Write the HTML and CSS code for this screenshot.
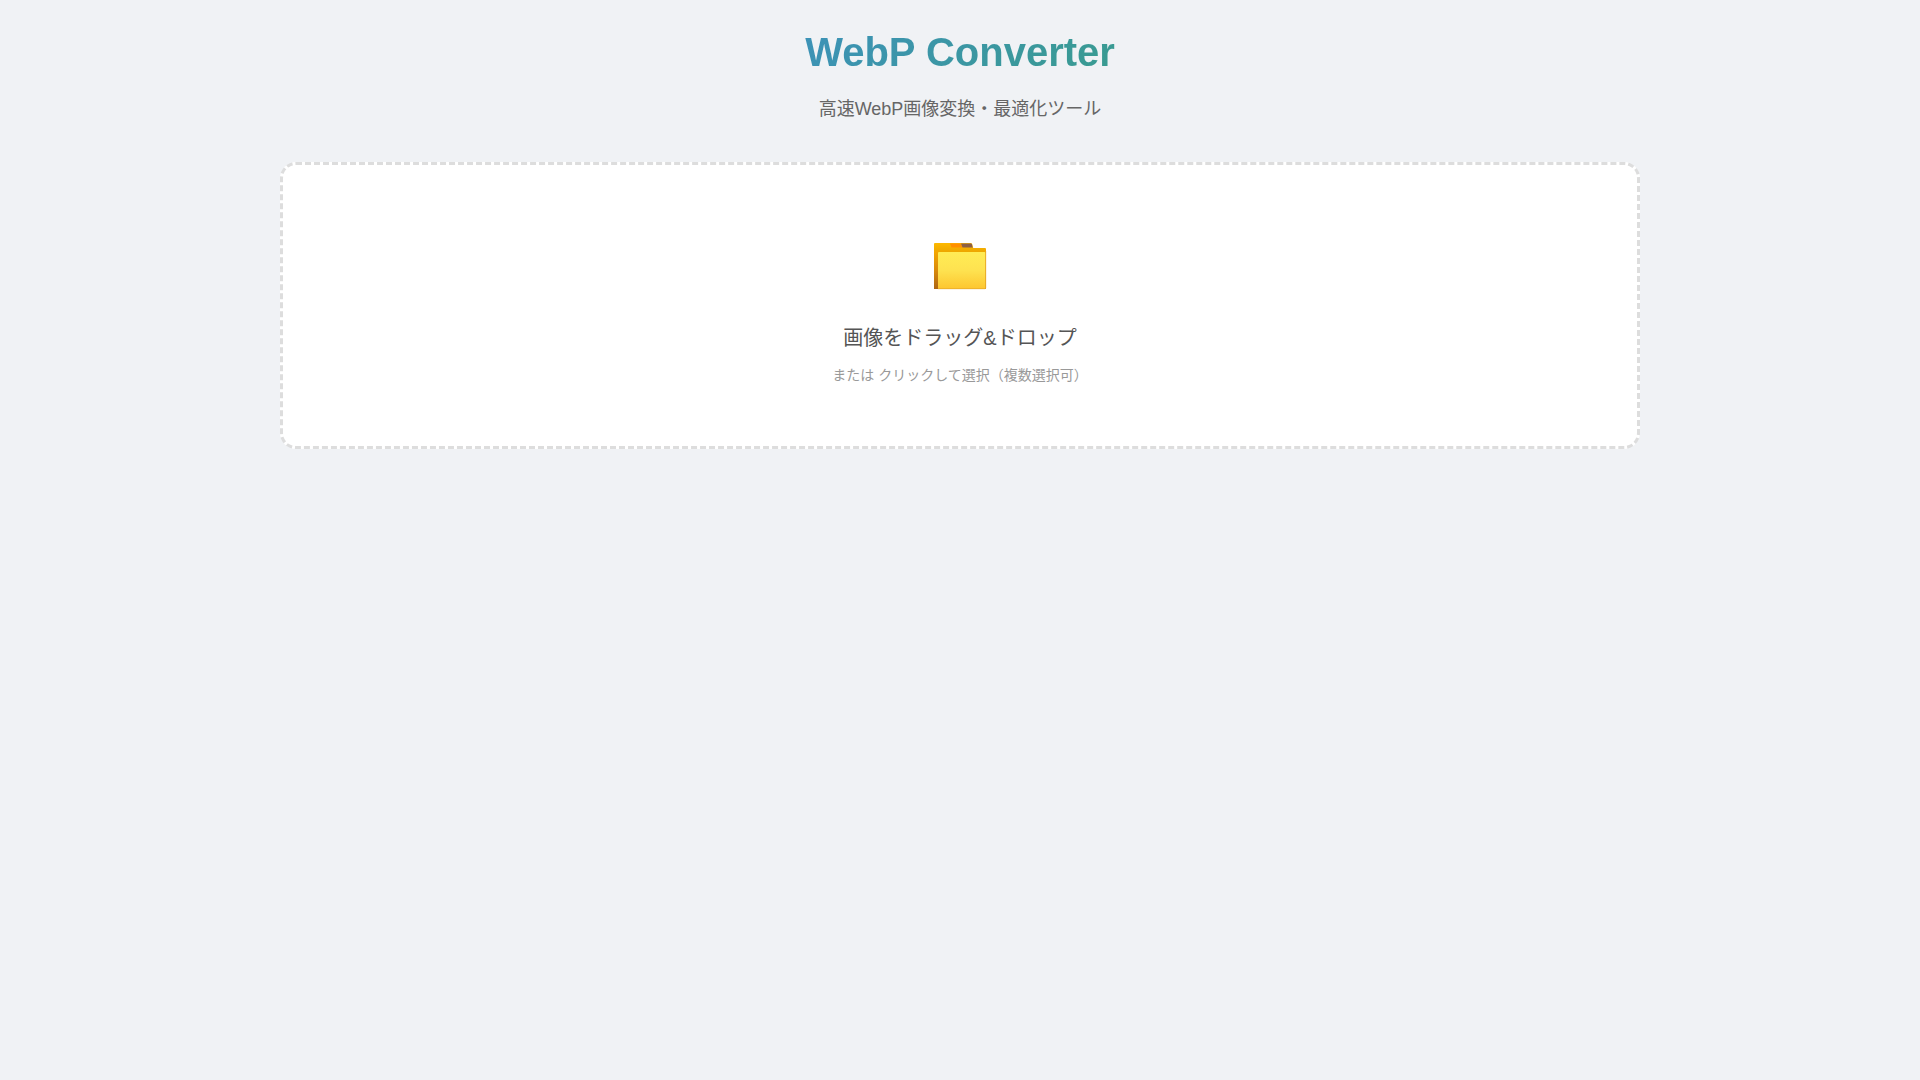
FILE: index.html
```html
<!DOCTYPE html>
<html lang="ja">
<head>
<meta charset="UTF-8">
<meta name="viewport" content="width=device-width, initial-scale=1">
<title>WebP Converter</title>
<link rel="stylesheet" href="styles.css">
</head>
<body>
<main class="container">
<header class="header">
<h1 class="title">WebP Converter</h1>
<p class="subtitle">高速WebP画像変換・最適化ツール</p>
</header>
<button type="button" class="drop-zone">
<svg class="drop-icon" viewBox="0 0 60 77" aria-hidden="true">
<defs>
<linearGradient id="back" x1="0" y1="0" x2="0" y2="1">
<stop offset="0" stop-color="#fdb900"/>
<stop offset=".2" stop-color="#eda600"/>
<stop offset="1" stop-color="#d99a1c"/>
</linearGradient>
<linearGradient id="spine" x1="0" y1="0" x2="0" y2="1">
<stop offset="0" stop-color="#f5a800"/>
<stop offset=".5" stop-color="#d98a0a"/>
<stop offset="1" stop-color="#ad6614"/>
</linearGradient>
<linearGradient id="front" x1="0" y1="0" x2="0" y2="1">
<stop offset="0" stop-color="#ffec55"/>
<stop offset=".5" stop-color="#fee250"/>
<stop offset="1" stop-color="#fdc62f"/>
</linearGradient>
</defs>
<path d="M4 19Q4 18 5 18H41Q42 18 42.300 19.500L43 22.400Q43.300 23 44 23H55Q56 23 56 24V64H4Z" fill="url(#back)"/>
<path d="M20 18.500H31L32.500 22.500H21.500Z" fill="#ff8f00"/>
<path d="M31 18.500H41Q41.700 18.500 42 19.500L42.700 22.500H32.500Z" fill="#8d5f45"/>
<path d="M4 26H8.500V64H4Z" fill="url(#spine)"/>
<path d="M8 28Q8 27 9 27H54.500Q55.500 27 55.500 28V63Q55.500 64 54.500 64H8Z" fill="url(#front)"/>
<path d="M8 63.700H55Q55.700 63.700 55.700 63V26" fill="none" stroke="#e5a528" stroke-width=".7"/>
</svg>
<span class="drop-text">画像をドラッグ&amp;ドロップ</span>
<span class="drop-hint">または クリックして選択（複数選択可）</span>
</button>
</main>
</body>
</html>
```
FILE: styles.css
```css
* {
  margin: 0;
  padding: 0;
  box-sizing: border-box;
}

body {
  background: #f0f2f5;
  color: #333;
  font-family: "Liberation Sans", "Noto Sans CJK JP", sans-serif;
}

.container {
  max-width: 1400px;
  margin: 0 auto;
  padding: 20px;
}

.header {
  margin-bottom: 38px;
  text-align: center;
}

.title {
  margin-bottom: 10px;
  background: linear-gradient(135deg, #4285f4, #34a853);
  -webkit-background-clip: text;
  background-clip: text;
  color: transparent;
  font-size: 40px;
  line-height: 64px;
}

.subtitle {
  color: #666;
  font-size: 18px;
  line-height: 30px;
}

.drop-zone {
  display: flex;
  flex-direction: column;
  align-items: center;
  width: 100%;
  padding: 60px;
  border: 3px dashed #ddd;
  border-radius: 16px;
  background: #fff;
  font-family: inherit;
  cursor: pointer;
}

.drop-icon {
  width: 60px;
  height: 77px;
  margin-bottom: 20px;
}

.drop-text {
  margin-bottom: 10px;
  color: #555;
  font-size: 20px;
  line-height: 32px;
}

.drop-hint {
  color: #999;
  font-size: 14px;
  line-height: 22px;
}
```
